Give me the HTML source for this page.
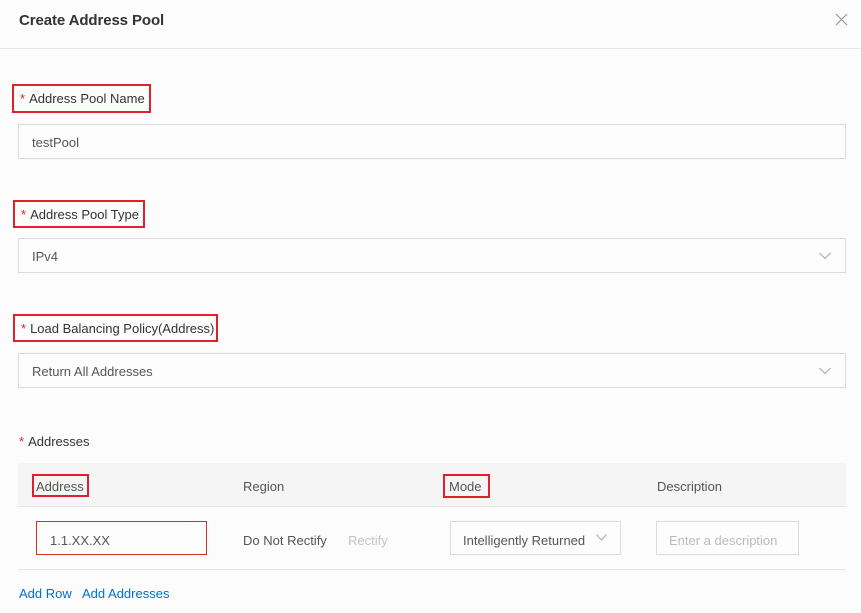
<!DOCTYPE html>
<html><head><meta charset="utf-8"><style>
*{box-sizing:border-box;margin:0;padding:0}
body{width:861px;height:613px;background:#fcfcfc;font-family:"Liberation Sans",sans-serif;font-size:13px;color:#333;position:relative;overflow:hidden}
.a{position:absolute}
.title{left:19px;top:12px;font-size:15px;color:#333;font-weight:600;letter-spacing:-0.1px}
.hr{left:0;top:48px;width:861px;height:1px;background:#e6e6e6}
.lbl{font-size:13px;color:#333;white-space:nowrap;line-height:26px;padding-left:6px;border:2px solid #e0202a}
.lbl b{color:#e0202a;font-weight:normal;margin-right:4px}
.inp{left:18px;width:828px;height:35px;border:1px solid #dcdcdc;background:#fdfdfd;padding-left:13px;line-height:35px;color:#555;font-size:13px}
.chev{position:absolute;right:14px;top:13px;width:12px;height:8px}
.txt{font-size:13px;color:#555;white-space:nowrap}
</style></head><body>
<div class="a title">Create Address Pool</div>
<svg class="a" style="left:835px;top:13px" width="13" height="13" viewBox="0 0 13 13"><path d="M1 1L12 12M12 1L1 12" stroke="#999" stroke-width="1.2"/></svg>
<div class="a hr"></div>

<div class="a lbl" style="left:12px;top:84px;width:139px;height:29px"><b>*</b>Address Pool Name</div>
<div class="a inp" style="top:124px">testPool</div>

<div class="a lbl" style="left:13px;top:200px;width:132px;height:28px"><b>*</b>Address Pool Type</div>
<div class="a inp" style="top:238px">IPv4<svg class="chev" viewBox="0 0 12 8"><path d="M0.5 1L6 6.5L11.5 1" fill="none" stroke="#aaa" stroke-width="1.1"/></svg></div>

<div class="a lbl" style="left:13px;top:314px;width:205px;height:28px"><b>*</b>Load Balancing Policy(Address)</div>
<div class="a inp" style="top:353px">Return All Addresses<svg class="chev" viewBox="0 0 12 8"><path d="M0.5 1L6 6.5L11.5 1" fill="none" stroke="#aaa" stroke-width="1.1"/></svg></div>

<div class="a txt" style="left:19px;top:434px;color:#333"><span style="color:#e0202a;margin-right:4px">*</span>Addresses</div>

<div class="a" style="left:18px;top:463px;width:828px;height:44px;background:#f5f5f5;border-bottom:1px solid #e6e6e6"></div>
<div class="a" style="left:32px;top:474px;width:57px;height:23px;border:2px solid #e0202a"></div>
<div class="a txt" style="left:36px;top:479px">Address</div>
<div class="a txt" style="left:243px;top:479px">Region</div>
<div class="a" style="left:443px;top:474px;width:47px;height:24px;border:2px solid #e0202a"></div>
<div class="a txt" style="left:449px;top:479px">Mode</div>
<div class="a txt" style="left:657px;top:479px">Description</div>

<div class="a" style="left:36px;top:521px;width:171px;height:34px;border:1px solid #d93026;background:#fdfdfd"></div>
<div class="a txt" style="left:50px;top:533px">1.1.XX.XX</div>
<div class="a txt" style="left:243px;top:533px">Do Not Rectify</div>
<div class="a txt" style="left:348px;top:533px;color:#c4c4c4">Rectify</div>
<div class="a" style="left:450px;top:521px;width:171px;height:34px;border:1px solid #dcdcdc;background:#fdfdfd"></div>
<div class="a txt" style="left:463px;top:533px">Intelligently Returned</div>
<svg class="a" style="left:596px;top:534px" width="11" height="7" viewBox="0 0 11 7"><path d="M0.5 0.5L5.5 6L10.5 0.5" fill="none" stroke="#aaa" stroke-width="1"/></svg>
<div class="a" style="left:656px;top:521px;width:143px;height:34px;border:1px solid #dcdcdc;background:#fdfdfd"></div>
<div class="a txt" style="left:669px;top:533px;color:#bbb">Enter a description</div>
<div class="a" style="left:18px;top:569px;width:828px;height:1px;background:#e6e6e6"></div>

<div class="a txt" style="left:19px;top:586px;color:#0070cc">Add Row</div>
<div class="a txt" style="left:82px;top:586px;color:#0070cc">Add Addresses</div>
</body></html>
